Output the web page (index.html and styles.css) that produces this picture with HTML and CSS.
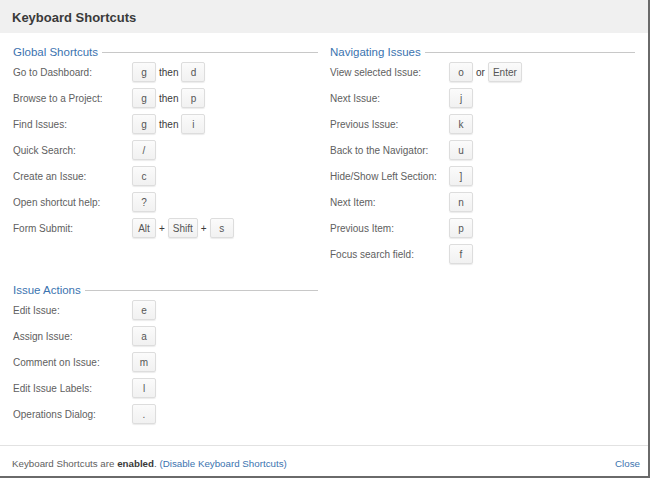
FILE: index.html
```html
<!DOCTYPE html>
<html>
<head>
<meta charset="utf-8">
<link rel="stylesheet" href="styles.css">
</head>
<body>
<div class="dialog">
  <div class="header">Keyboard Shortcuts</div>
  <div class="content">
    <div class="column">
      <div class="section">
        <div class="heading"><span>Global Shortcuts</span></div>
        <div class="row"><span class="label">Go to Dashboard:</span><kbd class="key">g</kbd><span class="sep">then</span><kbd class="key">d</kbd></div>
        <div class="row"><span class="label">Browse to a Project:</span><kbd class="key">g</kbd><span class="sep">then</span><kbd class="key">p</kbd></div>
        <div class="row"><span class="label">Find Issues:</span><kbd class="key">g</kbd><span class="sep">then</span><kbd class="key">i</kbd></div>
        <div class="row"><span class="label">Quick Search:</span><kbd class="key">/</kbd></div>
        <div class="row"><span class="label">Create an Issue:</span><kbd class="key">c</kbd></div>
        <div class="row"><span class="label">Open shortcut help:</span><kbd class="key">?</kbd></div>
        <div class="row"><span class="label">Form Submit:</span><kbd class="key">Alt</kbd><span class="sep">+</span><kbd class="key">Shift</kbd><span class="sep">+</span><kbd class="key">s</kbd></div>
      </div>
      <div class="section section-lower">
        <div class="heading"><span>Issue Actions</span></div>
        <div class="row"><span class="label">Edit Issue:</span><kbd class="key">e</kbd></div>
        <div class="row"><span class="label">Assign Issue:</span><kbd class="key">a</kbd></div>
        <div class="row"><span class="label">Comment on Issue:</span><kbd class="key">m</kbd></div>
        <div class="row"><span class="label">Edit Issue Labels:</span><kbd class="key">l</kbd></div>
        <div class="row"><span class="label">Operations Dialog:</span><kbd class="key">.</kbd></div>
      </div>
    </div>
    <div class="column">
      <div class="section">
        <div class="heading"><span>Navigating Issues</span></div>
        <div class="row"><span class="label">View selected Issue:</span><kbd class="key">o</kbd><span class="sep">or</span><kbd class="key">Enter</kbd></div>
        <div class="row"><span class="label">Next Issue:</span><kbd class="key">j</kbd></div>
        <div class="row"><span class="label">Previous Issue:</span><kbd class="key">k</kbd></div>
        <div class="row"><span class="label">Back to the Navigator:</span><kbd class="key">u</kbd></div>
        <div class="row"><span class="label">Hide/Show Left Section:</span><kbd class="key">]</kbd></div>
        <div class="row"><span class="label">Next Item:</span><kbd class="key">n</kbd></div>
        <div class="row"><span class="label">Previous Item:</span><kbd class="key">p</kbd></div>
        <div class="row"><span class="label">Focus search field:</span><kbd class="key">f</kbd></div>
      </div>
    </div>
  </div>
  <div class="footer">
    <span class="status">Keyboard Shortcuts are <strong>enabled</strong>. <a href="#" class="link">(Disable Keyboard Shortcuts)</a></span>
    <a href="#" class="link">Close</a>
  </div>
</div>
</body>
</html>
```
FILE: styles.css
```css
html, body {
  margin: 0;
  padding: 0;
  background: #ffffff;
}

body {
  font-family: "Liberation Sans", Arial, sans-serif;
  width: 650px;
  height: 478px;
  overflow: hidden;
}

.dialog {
  box-sizing: border-box;
  width: 650px;
  height: 478px;
  display: flex;
  flex-direction: column;
  border-right: 2px solid #6a6a6a;
  border-bottom: 2px solid #6a6a6a;
  background: #ffffff;
}

.header {
  height: 33px;
  flex: none;
  background: #f0f0f0;
  padding-left: 12px;
  font-size: 13px;
  font-weight: bold;
  color: #3a3a3a;
  line-height: 35px;
}

.content {
  flex: 1;
  display: flex;
  gap: 12px;
  padding: 12px 13px 0 13px;
}

.column {
  width: 305px;
  display: flex;
  flex-direction: column;
}

.section-lower {
  margin-top: 42px;
}

.heading {
  display: flex;
  align-items: center;
  height: 14px;
  font-size: 11.5px;
  color: #3b73af;
}

.heading::after {
  content: "";
  flex: 1;
  height: 1px;
  background: #c8c8c8;
  margin-left: 4px;
}

.row {
  display: flex;
  align-items: center;
  height: 26px;
  font-size: 10px;
  color: #606060;
}

.label {
  width: 119px;
  flex: none;
}

.key {
  box-sizing: border-box;
  min-width: 24px;
  height: 20px;
  padding: 0 4px;
  display: inline-flex;
  align-items: center;
  justify-content: center;
  font-family: "Liberation Sans", Arial, sans-serif;
  font-size: 10px;
  color: #555555;
  background: linear-gradient(#fbfbfb, #f1f1f1);
  border: 1px solid #dddddd;
  border-radius: 2px;
  box-shadow: 0 1px 1px rgba(0, 0, 0, 0.08);
}

.sep {
  margin: 0 3px;
  color: #3a3a3a;
  font-size: 10px;
}

.footer {
  height: 31px;
  flex: none;
  border-top: 1px solid #e2e2e2;
  display: flex;
  justify-content: space-between;
  align-items: flex-start;
  padding: 11px 8px 0 12px;
  box-sizing: border-box;
  font-size: 9.75px;
  line-height: 13px;
  color: #606060;
}

.footer strong {
  color: #3a3a3a;
}

.link {
  color: #3b73af;
  text-decoration: none;
}
```
